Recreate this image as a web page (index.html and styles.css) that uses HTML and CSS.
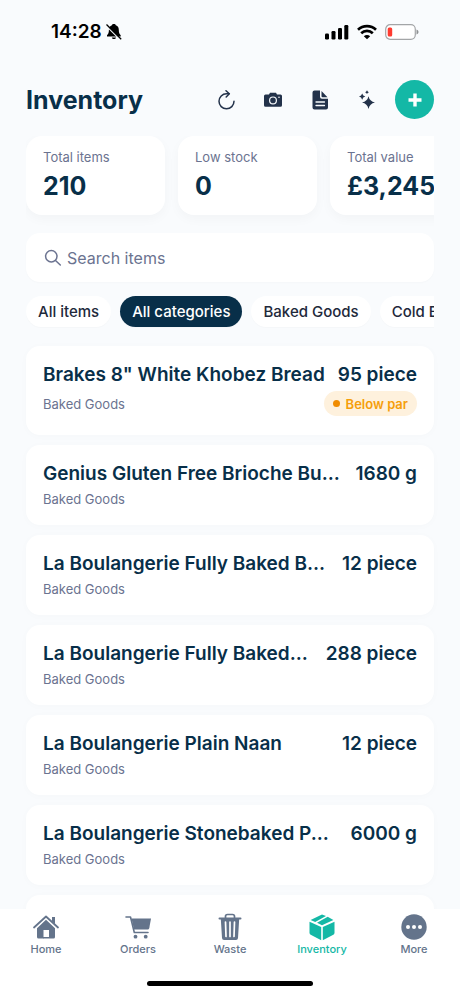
FILE: index.html
```html
<!DOCTYPE html>
<html lang="en">
<head>
<meta charset="utf-8">
<meta name="viewport" content="width=device-width, initial-scale=1">
<title>Inventory</title>
<link rel="stylesheet" href="styles.css">
</head>
<body>
<div class="status">
  <div class="status-time">14:28
    <svg width="16" height="18" viewBox="0 0 16 18" aria-hidden="true"><path d="M7.800 1C9 1 9.600 1.500 9.800 2.300C12 3 12.800 4.600 12.800 7C12.800 9.800 13.500 11 14.700 12.300V13.500H1V12.300C2.300 11 2.900 9.800 2.900 7C2.900 4.600 3.800 3 5.900 2.300C6.100 1.500 6.700 1 7.800 1Z"/><path d="M5.800 14.500H10C9.600 16.500 6.200 16.500 5.800 14.500Z"/><path d="M0 2.500L14.500 17" stroke="#f9fbfd" stroke-width="1.500"/><path d="M.5 1.500L15.200 16.200" stroke="#000" stroke-width="1.300"/></svg>
  </div>
  <div class="status-icons">
    <svg width="25" height="16" viewBox="0 0 25 16" aria-hidden="true"><rect x="1" y="9.500" width="4" height="6" rx="1.200"/><rect x="7.500" y="7" width="4" height="8.500" rx="1.200"/><rect x="14" y="4" width="4" height="11.500" rx="1.200"/><rect x="20.300" y="1" width="4" height="14.500" rx="1.200"/></svg>
    <svg width="20" height="16" viewBox="0 0 20 16" fill="none" stroke="#000" stroke-width="2.700" aria-hidden="true"><path d="M1 5.700C6 .9 14 .9 19 5.700"/><path d="M4.200 9.200C7.500 6.100 12.500 6.100 15.800 9.200"/><path d="M10 15.300L6.800 12.200C8.600 10.500 11.400 10.500 13.200 12.200Z" fill="#000" stroke="none"/></svg>
    <svg width="34" height="16" viewBox="0 0 34 16" aria-hidden="true"><rect x=".7" y=".7" width="29.600" height="14.600" rx="4.500" fill="#fff" stroke="#a3a5a7" stroke-width="1.200"/><rect x="2.700" y="3.500" width="4.500" height="9" rx="1.500" fill="#ff3b30"/><path d="M31.500 5.500C34.200 6.300 34.200 9.700 31.500 10.500Z" fill="#909294"/></svg>
  </div>
</div>
<header class="header">
  <h1>Inventory</h1>
  <div class="actions">
    <button type="button" aria-label="Refresh"><svg width="20" height="20" viewBox="0 0 20 20" fill="none" stroke="#23324a" stroke-width="1.500" stroke-linecap="round" stroke-linejoin="round"><path d="M13 3.800H10.500A7.500 7.500 0 1 0 18 11.300"/><path d="M10 .8L13.300 3.800L10.200 7"/></svg></button>
    <button type="button" aria-label="Take photo"><svg width="20" height="20" viewBox="0 0 20 20" fill="#23324a"><path d="M2.500 4.500H6L7 2.700H13L14 4.500H17.500Q19 4.500 19 6V15.200Q19 16.700 17.500 16.700H2.500Q1 16.700 1 15.200V6Q1 4.500 2.500 4.500Z"/><circle cx="10" cy="10.400" r="3.400" fill="none" stroke="#f9fbfd" stroke-width="1.200"/><circle cx="16" cy="7.300" r=".8" fill="#f9fbfd"/></svg></button>
    <button type="button" aria-label="Documents"><svg width="20" height="20" viewBox="0 0 20 20" fill="#23324a"><path d="M4.500 .5H10V6.800Q10 8.800 12 8.800H18V17.500Q18 19.500 16 19.500H4.500Q2.500 19.500 2.500 17.500V2.500Q2.500 .5 4.500 .5Z"/><path d="M11.500 1L17.500 7.300H12.500Q11.500 7.300 11.500 6.300Z"/><path d="M6 12H14.500M6 15.500H14.500" stroke="#f9fbfd" stroke-width="1.300" stroke-linecap="round"/></svg></button>
    <button type="button" aria-label="Suggestions"><svg width="20" height="20" viewBox="0 0 20 20" fill="#23324a"><path d="M11.500 6.300Q12.600 11.400 18 12.500Q12.600 13.600 11.500 19Q10.400 13.600 5 12.500Q10.400 11.400 11.500 6.300Z"/><path d="M5.200 3.500Q5.800 5.900 8.300 6.600Q5.800 7.200 5.200 9.700Q4.500 7.200 2 6.600Q4.500 5.900 5.200 3.500Z"/><path d="M10 .3Q10.500 1.700 11.900 2.200Q10.500 2.700 10 4.100Q9.500 2.700 8.100 2.200Q9.500 1.700 10 .3Z"/></svg></button>
    <button type="button" class="add" aria-label="Add item"><svg width="14" height="14" viewBox="0 0 14 14" stroke="#fff" stroke-width="3.400"><path d="M7 .5V13.500M.5 7H13.500"/></svg></button>
  </div>
</header>
<main class="main">
  <section class="stats" aria-label="Summary">
    <div class="stat"><span>Total items</span><strong>210</strong></div>
    <div class="stat"><span>Low stock</span><strong>0</strong></div>
    <div class="stat"><span>Total value</span><strong>£3,245</strong></div>
  </section>
  <label class="search">
    <svg width="18" height="18" viewBox="0 0 18 18" fill="none" stroke="#6b7390" stroke-width="1.500" stroke-linecap="round" aria-hidden="true"><circle cx="7.300" cy="7.300" r="5.700"/><path d="M11.500 11.500L16.300 16"/></svg>
    <input type="search" placeholder="Search items" aria-label="Search items">
  </label>
  <div class="chips">
    <button type="button">All items</button>
    <button type="button" class="selected">All categories</button>
    <button type="button">Baked Goods</button>
    <button type="button">Cold Beverages</button>
  </div>
  <ul class="list">
    <li class="item"><div class="row"><h2>Brakes 8" White Khobez Bread</h2><b>95 piece</b></div><div class="row meta"><span>Baked Goods</span><em>Below par</em></div></li>
    <li class="item"><div class="row"><h2>Genius Gluten Free Brioche Bu...</h2><b>1680 g</b></div><div class="row"><span>Baked Goods</span></div></li>
    <li class="item"><div class="row"><h2>La Boulangerie Fully Baked B...</h2><b>12 piece</b></div><div class="row"><span>Baked Goods</span></div></li>
    <li class="item"><div class="row"><h2>La Boulangerie Fully Baked...</h2><b>288 piece</b></div><div class="row"><span>Baked Goods</span></div></li>
    <li class="item"><div class="row"><h2>La Boulangerie Plain Naan</h2><b>12 piece</b></div><div class="row"><span>Baked Goods</span></div></li>
    <li class="item"><div class="row"><h2>La Boulangerie Stonebaked P...</h2><b>6000 g</b></div><div class="row"><span>Baked Goods</span></div></li>
    <li class="item"></li>
  </ul>
</main>
<nav class="tabs">
  <a href="#home"><svg width="28" height="28" viewBox="0 0 28 28" fill="currentColor"><path d="M20 4H23V11L20 8.500Z"/><path d="M2 14.500L14 3.500L26 14.500" fill="none" stroke="currentColor" stroke-width="1.800" stroke-linecap="round" stroke-linejoin="round"/><path d="M14 6.800L23 15.200V24Q23 25.500 21.500 25.500H17V17H11.500V25.500H6.500Q5 25.500 5 24V15.200Z"/><path d="M11 24H17V25.500H11Z"/></svg>Home</a>
  <a href="#orders"><svg width="28" height="28" viewBox="0 0 28 28" fill="currentColor"><path d="M2 4H6.500L10.300 19.500H24" fill="none" stroke="currentColor" stroke-width="1.600" stroke-linecap="round" stroke-linejoin="round"/><path d="M7.500 5.500H27L25.300 15Q25 16.500 23.500 16.500H10Z"/><circle cx="11.500" cy="23.700" r="1.900"/><circle cx="21.700" cy="23.700" r="1.900"/></svg>Orders</a>
  <a href="#waste"><svg width="28" height="28" viewBox="0 0 28 28" fill="currentColor"><path d="M9.500 5V3.500Q9.500 1.500 11.500 1.500H16.500Q18.500 1.500 18.500 3.500V5" fill="none" stroke="currentColor" stroke-width="1.700"/><rect x="2.500" y="4.500" width="23" height="2" rx="1"/><path d="M4.800 5.500H23.200L22 25Q21.800 27 20 27H8Q6.200 27 6 25Z"/><path d="M9.500 9L10 23.500M14 9V23.500M18.500 9L18 23.500" stroke="#fff" stroke-width="1.700" stroke-linecap="round"/></svg>Waste</a>
  <a href="#inventory" class="current" aria-current="page"><svg width="28" height="28" viewBox="0 0 28 28" fill="currentColor"><path d="M14 1.500L18 3.100L7.200 9L2.600 7Z"/><path d="M19.700 3.800L25.400 7L14 12.200L9 9.800Z"/><path d="M1.500 8.700L13.200 14V27.200L2.700 21.700Q1.500 21 1.500 19.700Z"/><path d="M26.500 8.700L14.800 14V27.200L25.300 21.700Q26.500 21 26.500 19.700Z"/></svg>Inventory</a>
  <a href="#more"><svg width="28" height="28" viewBox="0 0 28 28" fill="currentColor"><circle cx="14" cy="14" r="12.700"/><g fill="#fff"><circle cx="8" cy="14" r="2"/><circle cx="14" cy="14" r="2"/><circle cx="20" cy="14" r="2"/></g></svg>More</a>
</nav>
<div class="home-bar"><i></i></div>
</body>
</html>
```

FILE: styles.css
```css
* { box-sizing: border-box; }
body {
  margin: 0;
  height: 100vh;
  display: flex;
  flex-direction: column;
  overflow: hidden;
  background: #f9fbfd;
  color: #082f49;
  font-family: Inter, "Liberation Sans", sans-serif;
}
h1, h2, ul { margin: 0; padding: 0; }
svg { display: block; flex: none; }
button { font: inherit; border: 0; background: none; padding: 0; }

.status {
  display: flex;
  justify-content: space-between;
  align-items: center;
  height: 63px;
  padding: 0 41px 0 51px;
  color: #000;
}
.status-time { display: flex; align-items: center; gap: 4px; font-size: 19px; font-weight: 600; }
.status-icons { display: flex; align-items: center; gap: 8px; }

.header {
  display: flex;
  justify-content: space-between;
  align-items: center;
  padding: 17px 26px;
}
h1 { font-size: 25px; line-height: 32px; font-weight: 700; }
.actions { display: flex; align-items: center; gap: 27px; }
.actions .add {
  display: grid;
  place-items: center;
  width: 39px;
  height: 39px;
  margin-left: -9px;
  border-radius: 50%;
  background: #14b8a6;
}

.main {
  flex: 1;
  min-height: 0;
  overflow: hidden;
  padding: 0 26px;
}
.stats {
  display: flex;
  gap: 13px;
  overflow: hidden;
  height: 97px;
}
.stat {
  display: flex;
  flex-direction: column;
  flex: 0 0 139px;
  height: 79px;
  padding: 12px 17px;
  border-radius: 16px;
  background: #fff;
  box-shadow: 0 4px 12px #0f172a08;
}
.stat span { font-size: 13px; line-height: 18px; color: #6b7390; }
.stat strong { font-size: 25px; line-height: 40px; font-weight: 700; }

.search {
  display: flex;
  align-items: center;
  gap: 5px;
  height: 49px;
  padding: 0 18px;
  border-radius: 14px;
  background: #fff;
  box-shadow: 0 1px 2px #0f172a05;
}
.search input {
  flex: 1;
  min-width: 0;
  padding: 0;
  border: 0;
  outline: 0;
  background: none;
  font: 16px/24px Inter, sans-serif;
}
.search input::placeholder { color: #6b7390; }

.chips { display: flex; gap: 9px; overflow: hidden; padding: 14px 0 19px; }
.chips button {
  flex: none;
  height: 31px;
  padding: 0 12px;
  border-radius: 16px;
  background: #fff;
  color: #1e293b;
  font-size: 15px;
  font-weight: 500;
  box-shadow: 0 1px 1px #0f172a05;
}
.chips .selected { background: #082f49; color: #fff; }

.list { display: grid; grid-template-columns: minmax(0, 1fr); gap: 10px; list-style: none; }
.item {
  min-height: 80px;
  padding: 15px 17px;
  border-radius: 14px;
  background: #fff;
  box-shadow: 0 1px 8px #0f172a05;
}
.row { display: flex; justify-content: space-between; align-items: center; gap: 12px; }
.row h2, .row b { font-size: 19px; line-height: 28px; font-weight: 600; white-space: nowrap; }
.row h2 { min-width: 0; overflow: hidden; text-overflow: ellipsis; }
.row span { font-size: 13px; line-height: 22px; color: #6b7390; }
.row em {
  display: flex;
  align-items: center;
  gap: 6px;
  height: 25px;
  padding: 0 9px;
  border-radius: 13px;
  background: #fef1dd;
  color: #f59e0b;
  font-size: 13px;
  font-weight: 600;
  font-style: normal;
}
.row em::before { content: ""; width: 7px; height: 7px; border-radius: 50%; background: #f08c00; }
.meta { padding: 2px 0 4px; }

.tabs {
  display: grid;
  grid-template-columns: repeat(5, 1fr);
  padding: 4px 0 23px;
  background: #fff;
}
.tabs a {
  display: flex;
  flex-direction: column;
  align-items: center;
  color: #64748b;
  font-size: 11px;
  line-height: 16px;
  font-weight: 500;
  text-decoration: none;
}
.tabs .current { color: #14b8a6; }
.home-bar { display: flex; justify-content: center; height: 15px; padding-top: 1px; background: #fff; }
.home-bar i { width: 36%; height: 5px; border-radius: 3px; background: #000; }
```
